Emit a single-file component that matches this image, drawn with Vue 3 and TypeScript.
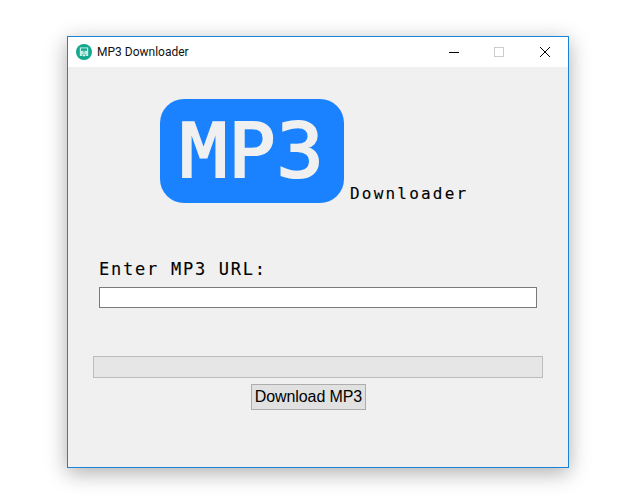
<script setup lang="ts">
const title: string = 'MP3 Downloader'
</script>

<template>
  <div class="page">
    <div class="window">
      <header class="titlebar">
        <svg class="app-icon" width="16" height="16" viewBox="0 0 16 16">
          <circle cx="8" cy="8" r="8" fill="#12a88e" />
          <path d="M3.8 3.4h8.4V12H3.8z" fill="#c9efe7" />
          <path d="M5 4.4h6v2.4H5z" fill="#12a88e" />
          <path d="M6.9 7.6h2.2v2.8h1.5L8 13.4l-2.6-3h1.5z" fill="#12a88e" />
          <path d="M7.4 8h1.2v3H9.6L8 12.8 6.4 11h1z" fill="#f2fbf9" />
        </svg>
        <span class="title">{{ title }}</span>
        <div class="controls">
          <div class="control min">
            <svg width="10" height="10" viewBox="0 0 10 10"><path d="M0 5.5h10" stroke="#000" fill="none" /></svg>
          </div>
          <div class="control">
            <svg width="10" height="10" viewBox="0 0 10 10"><rect x="0.5" y="0.5" width="9" height="9" stroke="#ccc" fill="none" /></svg>
          </div>
          <div class="control">
            <svg width="10" height="10" viewBox="0 0 10 10"><path d="M0 0l10 10M10 0L0 10" stroke="#000" fill="none" /></svg>
          </div>
        </div>
      </header>
      <main class="content">
        <div class="brand">
          <div class="logo"><span>MP3</span></div>
          <span class="sub">Downloader</span>
        </div>
        <label class="url-label">Enter MP3 URL:</label>
        <input class="url-input" type="text" />
        <div class="progress"></div>
        <button class="download" type="button">Download MP3</button>
      </main>
    </div>
  </div>
</template>

<style>
html, body { margin: 0; background: #fff; }
</style>

<style scoped>
.page {
  width: 630px;
  height: 502px;
  padding: 36px 0 0 67px;
  box-sizing: border-box;
  overflow: hidden;
  background: #fff;
}
.window {
  width: 502px;
  height: 432px;
  box-sizing: border-box;
  border: 1px solid #1883d7;
  background: #f0f0f0;
  box-shadow: 0 5px 20px rgba(0, 0, 0, 0.32);
  display: flex;
  flex-direction: column;
}
.titlebar {
  height: 30px;
  flex: none;
  background: #fff;
  display: flex;
  align-items: center;
  padding-left: 8px;
}
.app-icon { flex: none; }
.title {
  margin: -1px 0 0 5px;
  font: 12px Roboto, "Noto Sans", sans-serif;
  color: #111;
}
.controls { margin-left: auto; display: flex; }
.control {
  width: 46px;
  height: 30px;
  display: flex;
  align-items: center;
  justify-content: center;
}
.control.min { width: 44px; }
.content {
  flex: 1;
  display: flex;
  flex-direction: column;
  padding: 32px 25px 0 25px;
}
.brand {
  display: flex;
  align-items: flex-end;
  margin-left: 67px;
}
.logo {
  width: 184px;
  height: 104px;
  border-radius: 24px;
  background: #1a82ff;
  display: flex;
  align-items: center;
  justify-content: center;
  color: #f0f0f0;
}
.logo span {
  font: 400 74px/1 "DejaVu Sans Mono", monospace;
  letter-spacing: 1px;
  -webkit-text-stroke: 2.2px #f0f0f0;
  transform: scaleX(1.06);
}
.sub {
  margin: 0 0 -1px 6px;
  font: 16px/20px "DejaVu Sans Mono", monospace;
  letter-spacing: 2.2px;
  -webkit-text-stroke: 0.12px #000;
  color: #000;
}
.url-label {
  margin: 56px 0 0 6px;
  font: 17px/20px "DejaVu Sans Mono", monospace;
  letter-spacing: 1.75px;
  -webkit-text-stroke: 0.12px #000;
  color: #000;
}
.url-input {
  margin: 8px 0 0 6px;
  width: 438px;
  height: 21px;
  box-sizing: border-box;
  border: 1px solid #7a7a7a;
  background: #fff;
  padding: 0;
  border-radius: 0;
  outline: none;
}
.progress {
  margin-top: 48px;
  width: 450px;
  height: 22px;
  box-sizing: border-box;
  border: 1px solid #bcbcbc;
  background: #e6e6e6;
}
.download {
  margin: 6px 0 0 158px;
  width: 115px;
  height: 26px;
  box-sizing: border-box;
  border: 1px solid #adadad;
  background: #e1e1e1;
  border-radius: 0;
  padding: 0;
  font: 16px "Liberation Sans", sans-serif;
  letter-spacing: -0.1px;
  color: #000;
}
</style>
